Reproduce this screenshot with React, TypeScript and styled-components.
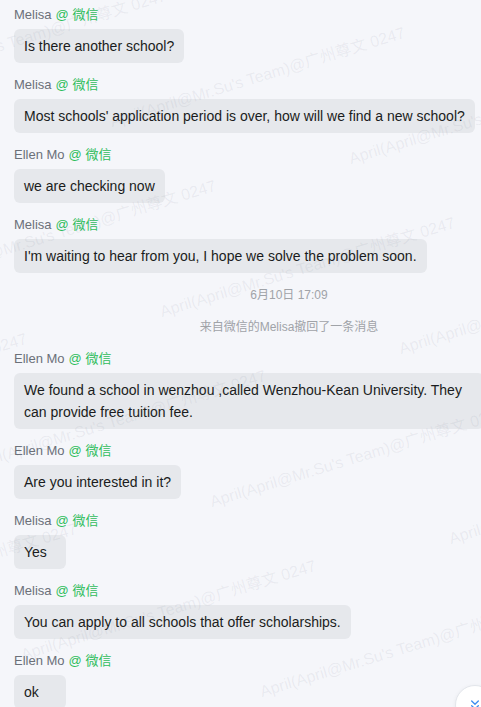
import React from "react";
import styled, { createGlobalStyle } from "styled-components";
import { ChevronsDown } from "lucide-react";

const GlobalStyle = createGlobalStyle`
  html, body {
    margin: 0;
    padding: 0;
    background: #f5f6fa;
    overflow: hidden;
  }
  * {
    box-sizing: border-box;
  }
`;

const Page = styled.div`
  position: relative;
  width: 481px;
  height: 707px;
  overflow: hidden;
  background: #f5f6fa;
  font-family: "Liberation Sans", "Noto Sans CJK SC", sans-serif;
`;

const ChatList = styled.div`
  display: flex;
  flex-direction: column;
  align-items: flex-start;
  width: 578px;
  padding: 5px 14px 0;
`;

const Message = styled.div`
  display: flex;
  flex-direction: column;
  align-items: flex-start;
  margin-bottom: 12px;
`;

const NameRow = styled.div`
  display: flex;
  align-items: center;
  gap: 4px;
  height: 20px;
  margin-bottom: 4px;
  font-size: 13px;
  line-height: 20px;
  color: #6b7079;
`;

const Source = styled.span`
  color: #2fbd5c;
`;

const Bubble = styled.div`
  max-width: 470px;
  min-width: 52px;
  padding: 6px 10px;
  border-radius: 6px;
  background: #e6e8ec;
  color: #1a1c20;
  font-size: 14px;
  line-height: 22px;
`;

const Notice = styled.div`
  align-self: stretch;
  margin-bottom: 12px;
  text-align: center;
  font-size: 12px;
  line-height: 20px;
  color: #a0a3a8;
`;

const WatermarkLayer = styled.div`
  position: absolute;
  inset: 0;
  pointer-events: none;
  overflow: hidden;
`;

const Mark = styled.span`
  position: absolute;
  white-space: nowrap;
  font-size: 16px;
  line-height: 16px;
  color: rgba(120, 128, 150, 0.1);
  transform: rotate(-17deg);
  transform-origin: 0 100%;
`;

const ScrollButton = styled.div`
  position: absolute;
  left: 455px;
  top: 685px;
  width: 40px;
  height: 40px;
  display: flex;
  align-items: center;
  justify-content: center;
  border-radius: 50%;
  background: #ffffff;
  border: 1px solid #e3e6eb;
  box-shadow: 0 1px 4px rgba(0, 0, 0, 0.06);
  color: #3d8ef0;
`;

type Item =
  | { kind: "msg"; name: string; text: string }
  | { kind: "notice"; text: string };

const items: Item[] = [
  { kind: "msg", name: "Melisa", text: "Is there another school?" },
  {
    kind: "msg",
    name: "Melisa",
    text: "Most schools' application period is over, how will we find a new school?",
  },
  { kind: "msg", name: "Ellen Mo", text: "we are checking now" },
  {
    kind: "msg",
    name: "Melisa",
    text: "I'm waiting to hear from you, I hope we solve the problem soon.",
  },
  { kind: "notice", text: "6月10日 17:09" },
  { kind: "notice", text: "来自微信的Melisa撤回了一条消息" },
  {
    kind: "msg",
    name: "Ellen Mo",
    text: "We found a school in wenzhou ,called Wenzhou-Kean University. They can provide free tuition fee.",
  },
  { kind: "msg", name: "Ellen Mo", text: "Are you interested in it?" },
  { kind: "msg", name: "Melisa", text: "Yes" },
  {
    kind: "msg",
    name: "Melisa",
    text: "You can apply to all schools that offer scholarships.",
  },
  { kind: "msg", name: "Ellen Mo", text: "ok" },
];

const WATERMARK = "April(April@Mr.Su's Team)@广州尊文 0247";

// tiled watermark lattice
const marks: { x: number; y: number }[] = [];
for (let i = -5; i <= 5; i++) {
  for (let j = -4; j <= 4; j++) {
    const x = 163 + i * 50 + j * 239;
    const y = 320 + i * 190 + j * 37;
    if (x > -320 && x < 481 && y > -20 && y < 800) marks.push({ x, y });
  }
}

const App: React.FC = () => {
  return (
    <Page>
      <GlobalStyle />
      <ChatList>
        {items.map((item, idx) =>
          item.kind === "notice" ? (
            <Notice key={idx}>{item.text}</Notice>
          ) : (
            <Message key={idx}>
              <NameRow>
                <span>{item.name}</span>
                <Source>@ 微信</Source>
              </NameRow>
              <Bubble>{item.text}</Bubble>
            </Message>
          )
        )}
      </ChatList>
      <WatermarkLayer>
        {marks.map((m, idx) => (
          <Mark key={idx} style={{ left: m.x, top: m.y - 16 }}>
            {WATERMARK}
          </Mark>
        ))}
      </WatermarkLayer>
      <ScrollButton>
        <ChevronsDown size={16} strokeWidth={2} />
      </ScrollButton>
    </Page>
  );
};

export default App;
